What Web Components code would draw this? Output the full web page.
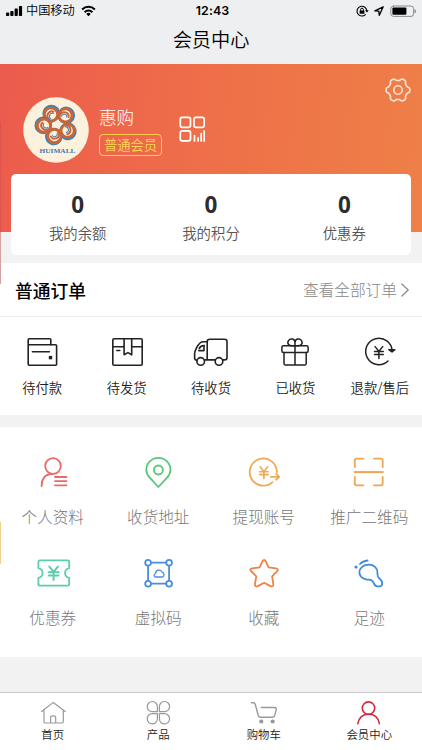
<!DOCTYPE html>
<html lang="zh-CN">
<head>
<meta charset="utf-8">
<meta name="viewport" content="width=device-width">
<title>会员中心</title>
<style>
html,body{margin:0;padding:0;background:#f2f2f2}
body{width:422px;height:750px;overflow:hidden;font-family:"Noto Sans CJK SC",sans-serif;color:#333}
</style>
</head>
<body>
<member-page></member-page>
<script>
const yen = (x, y, s) => `<g transform="translate(${x} ${y}) scale(${s})"><path d="M-4-6 0-1 4-6M-4.6-.8H4.6M-4.6 2.3H4.6M0-1V6.5"/></g>`;
const rings = [[-5,-15.6],[9.4,-14.6],[11.6,.6],[-1.6,6],[-12,-4.2]].map(([x, y], i) =>
  `<g transform="translate(${x} ${y}) rotate(${i*72-20})"><circle r="7.6" stroke="#3f82b5" stroke-width="2.4" cx=".5" cy="-.7"/><circle r="6.6" stroke="#cb6438" stroke-width="2.8"/><path d="M-3.6 3.8C-6-1 0-4.8 3.2-1.6" stroke="#cb6438" stroke-width="1.9"/><path d="M-1.8 4C-3.6 .5 0-2.2 2.4 0" stroke="#3f82b5" stroke-width="1"/></g>`).join('');
const petal = (a) => `<path transform="translate(.4 -.3) rotate(${a})" d="M-1-1V-6.2A5.1 5.1 0 1 0-6.2-1Z"/>`;
const gear = (() => {
  let d = '';
  for (let i = 0; i < 120; i++) {
    const a = i * Math.PI / 60, r = 10.7 + 1.2 * Math.tanh(2 * Math.cos(6 * a)) ;
    d += (i ? 'L' : 'M') + (r * Math.sin(a + Math.PI / 6)).toFixed(2) + ' ' + (r * Math.cos(a + Math.PI / 6)).toFixed(2);
  }
  return d + 'Z';
})();
const icons = {
  signal: `<g fill="#000" stroke="none"><rect x="-8.5" y="1.6" width="3.2" height="3.4" rx=".8"/><rect x="-4.2" y="0" width="3.2" height="5" rx=".8"/><rect x=".1" y="-2.4" width="3.2" height="7.4" rx=".8"/><rect x="4.4" y="-5" width="3.2" height="10" rx=".8"/></g>`,
  wifi: `<path stroke-width="2" stroke-linecap="butt" d="M-6.4-1.6A9.3 9.3 0 0 1 6.4-1.6M-3.9 1.2A5.5 5.5 0 0 1 3.9 1.2"/><path fill="currentColor" stroke="none" d="M0 5.2-2.2 2.9A3.2 3.2 0 0 1 2.2 2.9Z"/>`,
  lock: `<path stroke-width="1.1" d="M4.8-.3A4.9 4.9 0 1 0 3.4 3.6"/><path fill="currentColor" stroke="none" d="M3.1-.8H6.7L4.9 1.6ZM-2.4-.4H2.4V2.8H-2.4Z"/><path stroke-width="1" d="M-1.4-.4V-1.4A1.4 1.4 0 0 1 1.4-1.4V-.4"/>`,
  location: `<path stroke-width="1.3" d="M4.2-4.2-4.2-.2-.2.2.3 4.3Z"/>`,
  battery: `<rect x="-12.2" y="-5" width="22.8" height="10.4" rx="2.6" stroke="#8c8c8e" stroke-width="1"/><rect x="-10.6" y="-3.4" width="14" height="7.2" rx="1" fill="#000" stroke="none"/><path d="M12-1.4A2 2 0 0 1 12 1.8Z" fill="#8c8c8e" stroke="#8c8c8e" stroke-width=".6"/>`,
  gear: `<path d="${gear}"/><circle r="4.2"/>`,
  qr: `<g stroke-width="1.7"><rect x="-11.7" y="-11.6" width="10.2" height="10" rx="1.8"/><rect x="2" y="-11.6" width="10.2" height="10" rx="1.8"/><rect x="-11.7" y="1.9" width="10.2" height="10" rx="1.8"/><path d="M2.5 6.5V12M6.1 8.8V12M9.2 4.5V12M12.2 2V12"/></g>`,
  logo: `<circle r="32.8" fill="#fcf1dc" stroke="none"/>${rings}<text x="1.5" y="22.8" text-anchor="middle" textLength="36" lengthAdjust="spacingAndGlyphs" font-family="Liberation Serif,serif" font-weight="700" font-size="7" fill="#3f78ae" stroke="none">HUIMALL</text>`,
  wallet: `<rect x="-13.8" y="-7.2" width="28.4" height="20.4" rx="1"/><path d="M-13.8-7V-12.2Q-13.8-13.2-12.8-13.2H7.8Q8.8-13.2 8.8-12.2V-7.2M-9.6-.2H7.4"/><rect x="6.8" y="3.9" width="3.4" height="3.4" fill="currentColor" stroke="none"/>`,
  parcel: `<rect x="-14.2" y="-13.2" width="29.4" height="26.4" rx="1.2"/><path d="M-14.2-5.2H-2.9M4.7-5.2H15.2M-2.9-13.2V2.8L.9.6 4.7 2.8V-13.2M-10.2-1.5H-7.2"/>`,
  truck: `<path d="M-6.5 8H-3.8V-10.5Q-3.8-12.8-1.5-12.8H13.6Q16-12.8 16-10.5V5.5Q16 7.9 13.6 7.9H12M4 7.9H-6M-14 8.3C-16 8.3-16.4 7-16.4 5.5V2C-16.4-1-13.5-7-11-9Q-9.6-10.2-7.5-10.2H-3.8M-7-6.4V-1.4H-12.2"/><path d="M-11.8-3.5C-11-5-9.5-6.4-7-6.4"/><circle cx="-10.3" cy="9.4" r="3.8"/><circle cx="8" cy="9.4" r="3.8"/>`,
  gift: `<g stroke-width="1.5"><rect x="-13.1" y="-6.2" width="26.2" height="6.7" rx="1.5"/><path d="M-11 .5V11.5Q-11 13.1-9.4 13.1H9.6Q11.2 13.1 11.2 11.5V.5M0-10V13M0-6.5C-7-5-8-9-6.5-11.3-4.5-14.5 0-13 0-9.5 0-13 4.5-14.5 6.5-11.3 8-9 7-5 0-6.5"/></g>`,
  refund: `<path stroke-width="1.5" d="M12.1-.7A13.2 13.2 0 1 0 8 9"/><path d="M8.8-2.3H14.8L12-.1Z" fill="currentColor"/>${yen(-1.1, .3, .95)}`,
  profile: `<circle cy="-6" r="7.8"/><path d="M-11.4 14C-11.4 6.5-7.5 2-1 2M2 5H13.5M2 9.1H13.5M2 13.3H13.5"/>`,
  pin: `<path d="M.4 15-7.8 6.2C-10.8 3-11.7.8-11.7-2.1A12.1 12.1 0 0 1 12.5-2.1C12.5.8 11.6 3 8.6 6.2Z"/><circle cx=".4" cy="-2" r="4.5"/>`,
  withdraw: `<path d="M12.9.1A13.6 13.6 0 1 0 8.5 10.1M6.8 4.8H15.2M12.2 1.9 15.2 4.8 12.2 7.7"/>${yen(-.1, .5, .92)}`,
  scan: `<path d="M-14.2-5V-11.6Q-14.2-13.3-12.5-13.3H-5.5M5-13.3H12Q13.7-13.3 13.7-11.6V-5M13.7 5V11.6Q13.7 13.3 12 13.3H5M-5.5 13.3H-12.5Q-14.2 13.3-14.2 11.6V5"/><path stroke-width="2" stroke-linecap="butt" d="M-15.2.1H14.5"/>`,
  coupon: `<path d="M-13-12.6H14.6Q16.2-12.6 16.2-11V-4.9C10.7-3.8 10.7 3.8 16.2 4.9V11Q16.2 12.6 14.6 12.6H-13Q-14.6 12.6-14.6 11V4.9C-9.1 3.8-9.1-3.8-14.6-4.9V-11Q-14.6-12.6-13-12.6Z"/>${yen(.6, 0, 1.08)}`,
  virtual: `<path d="M-9.9-10.3H11.1V10.7H-9.9Z"/><g fill="#fff"><circle cx="-9.9" cy="-10.3" r="2.9"/><circle cx="11.1" cy="-10.3" r="2.9"/><circle cx="-9.9" cy="10.7" r="2.9"/><circle cx="11.1" cy="10.7" r="2.9"/></g><path stroke-width="1.3" d="M-2 4C-4.2 4-4.7 1.3-2.4.5-2.6-3 2.5-4.2 3.7-1.2 6.4-.8 6.7 4 4.2 4Z"/>`,
  star: `<path d="M-1.5-11.8Q.2-14.2 1.7-11.8L4.6-5.7 12-4.6Q15-3.8 13.2-1.8L8.1 3.3 9.3 10.8Q9.6 14.4 6.5 13.1L.2 9.7-6.2 13.1Q-9.5 14.2-9 10.8L-7.7 3.3-12.9-1.8Q-14.8-4-11.7-4.6L-4.4-5.7Z"/>`,
  foot: `<path d="M-9.6-.7C-9.6-5-5.5-8.3-.2-8.3 5-8.3 8.4-5 8.4-.8 8.4 3.5 9 4.4 11 6 14 8.5 13.8 13 11 13.3H8.3C4.5 13.3 5.8 9.5 2.8 7.4 1 6.3-1 7-3.2 6.3-7 5.4-9.6 2.7-9.6-.7Z"/><path d="M-9-9Q-6.2-12-1.4-12.5"/><circle cx="-13" cy="-6" r="1.6" fill="currentColor" stroke="none"/>`,
  home: `<path stroke-width="1.2" d="M-11.4-1.5.3-10.6 12.2-1.5M-9-3V8.4Q-9 10-7.4 10H8.7Q10.3 10 10.3 8.4V-3M-2.4 9.8V4.5Q-2.4 2.8.1 2.8 2.7 2.8 2.7 4.5V9.8"/>`,
  product: `<g stroke-width="1.2">${[0, 90, 180, 270].map(petal).join('')}</g>`,
  cart: `<path stroke-width="1.4" d="M-12.5-10.3H-10.8Q-9.2-10.3-8.7-8.5L-5.8 2.2Q-5.2 4.2-3.2 4.2H8.5Q10.3 4.2 10.8 2.2L12.2-3.4Q12.6-5.5 10.5-5.5H-2.8"/><circle cx="-2.7" cy="8.5" r="2.1" fill="currentColor" stroke="none"/><circle cx="8.7" cy="8.5" r="2.1" fill="currentColor" stroke="none"/>`,
  user: `<circle cx="-.5" cy="-4.9" r="6.2"/><path d="M-11.2 10.6C-10 4.3-5.5 1.3-.4 1.3 4.7 1.3 9.2 4.3 10.4 10.6"/>`,
  chevron: `<path stroke-width="1.2" d="M-3.2-6 3.2 0-3.2 6"/>`
};

const define = (tag, css, html) => customElements.define(tag, class extends HTMLElement {
  connectedCallback() {
    if (this.shadowRoot) return;
    const a = n => this.getAttribute(n) || '';
    this.attachShadow({ mode: 'open' }).innerHTML = `<style>:host{display:block;box-sizing:border-box}${css}</style>` + html(a);
  }
});

define('ui-icon', `:host{display:block;flex:none}svg{display:block;overflow:visible}`, a => {
  const s = +a('size') || 34, w = +a('w') || s;
  return `<svg width="${w}" height="${s}" viewBox="${-w/2} ${-s/2} ${w} ${s}" fill="none" stroke="currentColor" stroke-width="${a('weight') || 1.6}" stroke-linecap="round" stroke-linejoin="round">${icons[a('name')]}</svg>`;
});

define('status-bar', `:host{display:grid;grid-template-columns:1fr auto 1fr;align-items:center;height:21px;padding:0 6px 0 6px;font-size:12.2px;font-weight:350;line-height:21px;color:#000}
.l,.r{display:flex;align-items:center}.r{justify-content:flex-end}.t{font:600 12.4px/21px Inter,sans-serif;letter-spacing:.1px;padding-left:3px}.c{margin:0 6px 0 3px}`, () =>
  `<div class="l"><ui-icon name="signal" w="17" size="20"></ui-icon><span class="c">中国移动</span><ui-icon name="wifi" w="15" size="20"></ui-icon></div><span class="t">12:43</span>
   <div class="r"><ui-icon name="lock" w="12" size="20"></ui-icon><ui-icon style="margin:0 6px 0 6px" name="location" w="10" size="20"></ui-icon><ui-icon name="battery" w="26" size="20"></ui-icon></div>`);

define('nav-title', `:host{height:43px;padding-top:3px;text-align:center;font-size:19.2px;font-weight:350;line-height:30px;color:#000}`, () => `<slot></slot>`);

define('member-hero', `:host{height:168px;background:linear-gradient(97deg,#ec5b4d 0%,#ee6e49 45%,#ee8048 100%);color:#fff}
.row{display:flex;align-items:flex-start;padding:13px 11px 0 22.5px}
.logo{margin-top:20px}.info{margin:26px 0 0 10.5px}.name{font-size:17.6px;line-height:28px;height:31px;font-weight:300}
.badge{display:block;box-sizing:border-box;width:63px;height:22px;border:1px solid #fbcf4c;border-radius:4px;color:#fbd758;font-size:13.3px;font-weight:350;line-height:19px;text-align:center}
.qr{margin:39px 0 0 16.5px}.gear{margin-left:auto;color:#ffe5da}`, () =>
  `<div class="row"><ui-icon class="logo" name="logo" size="66"></ui-icon><div class="info"><div class="name"><slot name="name"></slot></div><span class="badge"><slot name="level"></slot></span></div><ui-icon class="qr" name="qr" size="26"></ui-icon><ui-icon class="gear" name="gear" size="26"></ui-icon></div>`);

define('stat-card', `:host{display:grid;grid-template-columns:repeat(3,1fr);width:400px;height:81px;margin:-58px 0 0 11px;background:#fff;border-radius:5px;position:relative}`, () => `<slot></slot>`);
define('stat-item', `:host{text-align:center;padding-top:14px;color:#555;font-size:14.4px;font-weight:350;line-height:24px}b{display:block;font:700 22.5px/33px "Noto Sans",sans-serif;color:#2d2d2d}`, a => `<b>${a('value')}</b><slot></slot>`);

define('order-panel', `:host{margin-top:8px;height:152px;background:#fff}
header{display:flex;align-items:center;box-sizing:border-box;height:54px;padding:0 11px 0 15px;border-bottom:1px solid #eee;line-height:54px;white-space:nowrap}
h2{margin:0;font-size:17.8px;font-weight:500;color:#000}.m{margin-left:auto;font-size:15.7px;color:#888;font-weight:300}
ui-icon{margin-left:2px;color:#888}.g{display:grid;grid-template-columns:repeat(5,1fr)}`, () =>
  `<header><h2>普通订单</h2><span class="m">查看全部订单</span><ui-icon name="chevron" w="12" size="20"></ui-icon></header><div class="g"><slot></slot></div>`);

define('order-item', `:host{display:flex;flex-direction:column;align-items:center;padding-top:17.5px;font-size:13.3px;font-weight:350;line-height:20px;color:#222;white-space:nowrap}ui-icon{color:#222}span{margin-top:9px}`, a =>
  `<ui-icon name="${a('icon')}"></ui-icon><span><slot></slot></span>`);

define('service-grid', `:host{display:grid;grid-template-columns:repeat(4,1fr);grid-auto-rows:101px;height:230px;margin-top:12px;padding-top:28px;background:#fff}`, () => `<slot></slot>`);
define('service-item', `:host{display:flex;flex-direction:column;align-items:center;font-size:15.6px;line-height:24px;color:#777;font-weight:300;white-space:nowrap}span{margin-top:15px}`, a =>
  `<ui-icon name="${a('icon')}" weight="1.8" style="color:${a('tint')}"></ui-icon><span><slot></slot></span>`);

define('tab-bar', `:host{display:grid;grid-template-columns:repeat(4,1fr);height:58px;margin-top:35px;border-top:1px solid #ccc;background:#fff}`, () => `<slot></slot>`);
define('tab-item', `:host{display:flex;flex-direction:column;align-items:center;padding-top:7px;font-size:11.4px;font-weight:350;line-height:16px;color:#222}ui-icon{color:#999}:host([active]) ui-icon{color:#d5283f}`, a =>
  `<ui-icon name="${a('icon')}" size="26"></ui-icon><span><slot></slot></span>`);

define('edge-marks', `:host{position:absolute;left:0;top:0;width:1px;height:750px;pointer-events:none;background:linear-gradient(transparent 122px,#dc5350 122px 232px,#d9a0a0 232px 284px,transparent 284px 522px,#f3d08c 522px 564px,transparent 564px)}`, () => '');

define('member-page', `:host{width:422px;height:750px;overflow:hidden;background:#f2f2f2}.top{background:#eeeff1}`, () => `
  <div class="top"><status-bar></status-bar><nav-title>会员中心</nav-title></div>
  <member-hero><span slot="name">惠购</span><span slot="level">普通会员</span></member-hero>
  <stat-card><stat-item value="0">我的余额</stat-item><stat-item value="0">我的积分</stat-item><stat-item value="0">优惠券</stat-item></stat-card>
  <order-panel>
    <order-item icon="wallet">待付款</order-item><order-item icon="parcel">待发货</order-item><order-item icon="truck">待收货</order-item><order-item icon="gift">已收货</order-item><order-item icon="refund">退款/售后</order-item>
  </order-panel>
  <service-grid>
    <service-item icon="profile" tint="#e56a68">个人资料</service-item><service-item icon="pin" tint="#57c878">收货地址</service-item><service-item icon="withdraw" tint="#eeaa55">提现账号</service-item><service-item icon="scan" tint="#f0a552">推广二维码</service-item>
    <service-item icon="coupon" tint="#5acdaa">优惠券</service-item><service-item icon="virtual" tint="#4b8ddb">虚拟码</service-item><service-item icon="star" tint="#ee8147">收藏</service-item><service-item icon="foot" tint="#3d8bdc">足迹</service-item>
  </service-grid>
  <tab-bar><tab-item icon="home">首页</tab-item><tab-item icon="product">产品</tab-item><tab-item icon="cart">购物车</tab-item><tab-item icon="user" active>会员中心</tab-item></tab-bar>
  <edge-marks></edge-marks>`);
</script>
</body>
</html>
